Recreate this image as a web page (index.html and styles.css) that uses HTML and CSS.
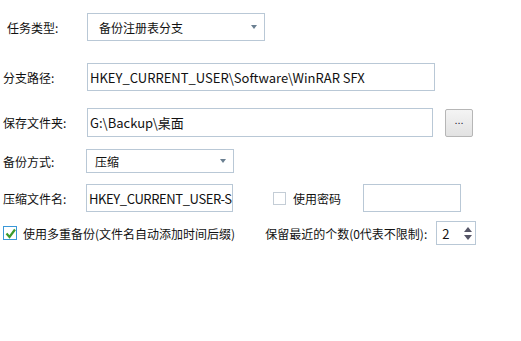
FILE: index.html
```html
<!DOCTYPE html>
<html>
<head>
<meta charset="utf-8">
<link rel="stylesheet" href="styles.css">
</head>
<body>
<div class="form">
  <div class="row r1">
    <span class="label l-indent">任务类型:</span>
    <div class="combo combo-wide"><span class="val">备份注册表分支</span><span class="arrow"></span></div>
  </div>
  <div class="row r2">
    <span class="label">分支路径:</span>
    <div class="input input-long">HKEY_CURRENT_USER\Software\WinRAR SFX</div>
  </div>
  <div class="row r3">
    <span class="label">保存文件夹:</span>
    <div class="input input-folder">G:\Backup\桌面</div>
    <button class="btn">...</button>
  </div>
  <div class="row r4">
    <span class="label">备份方式:</span>
    <div class="combo combo-short"><span class="val">压缩</span><span class="arrow"></span></div>
  </div>
  <div class="row r5">
    <span class="label">压缩文件名:</span>
    <div class="input input-name">HKEY_CURRENT_USER-S</div>
    <span class="check"></span>
    <span class="check-text">使用密码</span>
    <div class="input input-pass"></div>
  </div>
  <div class="row r6">
    <span class="check checked"><svg width="11" height="11" viewBox="0 0 11 11"><path d="M1.5 5.5 L4.5 9 L10 1.5" fill="none" stroke="#3c9a2c" stroke-width="2.2"/></svg></span>
    <span class="check-text multi">使用多重备份(文件名自动添加时间后缀)</span>
    <span class="keep">保留最近的个数(0代表不限制):</span>
    <div class="spin"><span class="spin-val">2</span><span class="spin-arrows"><span class="up"></span><span class="down"></span></span></div>
  </div>
</div>
</body>
</html>
```
FILE: styles.css
```css
html, body {
  margin: 0;
  padding: 0;
  background: #fff;
}
body {
  font-family: "Microsoft YaHei", "Noto Sans CJK SC", "Open Sans", sans-serif;
  font-size: 12px;
  color: #111;
  width: 521px;
  height: 341px;
  overflow: hidden;
}
.form {
  padding-top: 13px;
  display: flex;
  flex-direction: column;
}
.row {
  display: flex;
  align-items: center;
}
.r1 { height: 28px; margin-bottom: 22px; }
.r2 { height: 28px; margin-bottom: 17px; }
.r3 { height: 29px; margin-bottom: 12px; }
.r4 { height: 24px; margin-bottom: 11px; }
.r5 { height: 28px; margin-bottom: 9px; }
.r6 { height: 24px; }
.label {
  width: 83px;
  padding-left: 3px;
  flex: none;
  white-space: nowrap;
}
.l-indent {
  width: 80px;
  padding-left: 7px;
}
.combo {
  box-sizing: border-box;
  border: 1px solid #b9c8d6;
  height: 100%;
  display: flex;
  align-items: center;
  position: relative;
  background: #fff;
}
.combo-wide { width: 178px; padding-left: 11px; }
.combo-short { width: 148px; padding-left: 8px; }
.arrow {
  position: absolute;
  right: 7px;
  top: 50%;
  margin-top: -2px;
  width: 0;
  height: 0;
  border-left: 3.5px solid transparent;
  border-right: 3.5px solid transparent;
  border-top: 4px solid #6a7f91;
}
.input {
  box-sizing: border-box;
  border: 1px solid #b9c8d6;
  height: 100%;
  display: flex;
  align-items: center;
  padding-left: 2px;
  white-space: nowrap;
  overflow: hidden;
  background: #fff;
  font-size: 13px;
}
.r2 .input { margin-left: 1px; }
.input-long { width: 348px; }
.r3 .input { margin-left: 1px; }
.input-folder { width: 346px; }
.input-name { width: 147px; letter-spacing: -0.4px; }
.input-pass { width: 98px; }
.btn {
  margin-left: 12px;
  box-sizing: border-box;
  width: 28px;
  height: 28px;
  border: 1px solid #b6b6b6;
  border-radius: 2px;
  background: linear-gradient(#f4f4f4, #e2e2e2);
  font: 11px "Liberation Sans", sans-serif;
  color: #223;
  padding: 0 0 4px;
  line-height: 1;
}
.check {
  box-sizing: border-box;
  width: 13px;
  height: 13px;
  border: 1px solid #c4cdd6;
  background: #fff;
  flex: none;
  display: flex;
  align-items: center;
  justify-content: center;
}
.r5 .check { margin-left: 40px; }
.r5 .check-text { margin-left: 7px; }
.r5 .input-pass { margin-left: 22px; }
.checked {
  width: 14px;
  height: 14px;
  margin-left: 3px;
  border: 1px solid #3a98d8;
}
.multi { margin-left: 6px; }
.keep { margin-left: 30px; }
.spin {
  box-sizing: border-box;
  margin-left: 9px;
  width: 40px;
  height: 24px;
  border: 1px solid #b9c8d6;
  display: flex;
  align-items: center;
  justify-content: space-between;
  padding: 0 3px 0 5px;
  font-size: 13px;
}
.spin-arrows {
  display: flex;
  flex-direction: column;
  gap: 3px;
}
.up {
  width: 0; height: 0;
  border-left: 4px solid transparent;
  border-right: 4px solid transparent;
  border-bottom: 5px solid #556;
}
.down {
  width: 0; height: 0;
  border-left: 4px solid transparent;
  border-right: 4px solid transparent;
  border-top: 5px solid #556;
}
```
